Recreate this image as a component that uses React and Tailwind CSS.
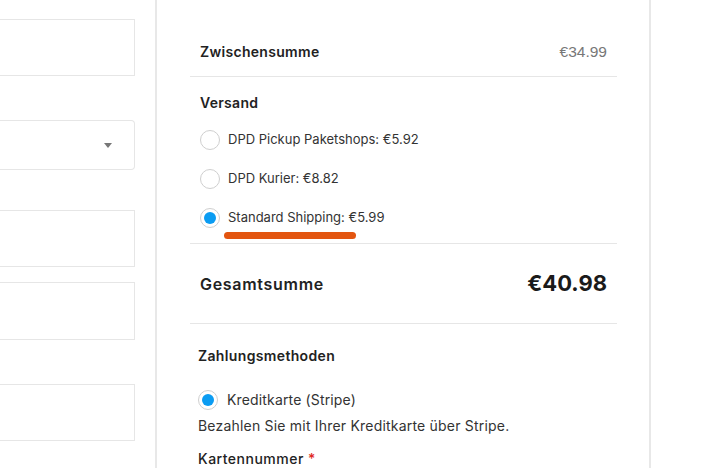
import React, { useState } from 'react';

const Radio = ({ checked }) => (
  <span className="w-[20px] h-[20px] rounded-full border border-[#cfcfcf] bg-white flex items-center justify-center shrink-0">
    {checked && <span className="w-[12px] h-[12px] rounded-full bg-[#0b9cf2]" />}
  </span>
);

const shipping = [
  { id: 'pickup', label: 'DPD Pickup Paketshops: €5.92' },
  { id: 'kurier', label: 'DPD Kurier: €8.82' },
  { id: 'standard', label: 'Standard Shipping: €5.99' },
];

const App = () => {
  const [method, setMethod] = useState('standard');

  return (
    <div className="w-[714px] h-[468px] flex bg-white overflow-hidden text-[#222] font-['Inter','Open_Sans',sans-serif]">
      {/* left form column, cut off */}
      <div className="w-[155px] shrink-0 pr-[20px] pt-[19px] flex flex-col">
        <div className="h-[57px] border-y border-r border-[#e6e6e6]" />
        <div className="h-[50px] mt-[44px] border-y border-r border-[#e6e6e6] rounded-r-[4px] flex items-center justify-end pr-[22px]">
          <span className="w-0 h-0 border-l-[4px] border-r-[4px] border-t-[5px] border-l-transparent border-r-transparent border-t-[#777]" />
        </div>
        <div className="h-[57px] mt-[40px] border-y border-r border-[#e6e6e6]" />
        <div className="h-[58px] mt-[15px] border-y border-r border-[#e6e6e6]" />
        <div className="h-[57px] mt-[44px] border-y border-r border-[#e6e6e6]" />
      </div>

      {/* order summary card */}
      <div className="w-[496px] shrink-0 border-x-2 border-[#e8e8e8] pl-[33px] pr-[32px] pt-[27px]">
        <div className="h-[50px] flex items-center justify-between px-[10px] border-b border-[#e6e6e6]">
          <span className="text-[14px] font-semibold tracking-[0.3px]">Zwischensumme</span>
          <span className="text-[15.5px] text-[#777] font-['Liberation_Sans',sans-serif]">€34.99</span>
        </div>

        <div className="px-[10px] pt-[16px] border-b border-[#e6e6e6] h-[167px]">
          <div className="text-[14px] font-semibold leading-[20px] tracking-[0.3px]">Versand</div>
          <div className="flex flex-col mt-[7px]">
            {shipping.map((s) => (
              <button
                key={s.id}
                onClick={() => setMethod(s.id)}
                className="h-[39px] flex items-center gap-[8px] text-left"
              >
                <Radio checked={method === s.id} />
                <span className="relative text-[13px] text-[#333]">
                  {s.label}
                  {s.id === 'standard' && method === 'standard' && (
                    <span className="absolute left-[-4px] top-[24px] w-[132px] h-[7px] rounded-full bg-[#e35510]" />
                  )}
                </span>
              </button>
            ))}
          </div>
        </div>

        <div className="h-[80px] flex items-center justify-between px-[10px] border-b border-[#e6e6e6]">
          <span className="text-[16px] font-semibold tracking-[0.7px]">Gesamtsumme</span>
          <span className="text-[22px] font-bold text-[#1a1a1a]">€40.98</span>
        </div>

        <div className="px-[8px] pt-[22px]">
          <div className="text-[14px] font-semibold leading-[20px] tracking-[0.35px]">Zahlungsmethoden</div>
          <div className="flex items-center gap-[9px] mt-[23px]">
            <Radio checked />
            <span className="text-[14px] text-[#333] tracking-[0.15px]">Kreditkarte (Stripe)</span>
          </div>
          <div className="text-[14px] text-[#333] mt-[5px] tracking-[0.2px]">Bezahlen Sie mit Ihrer Kreditkarte über Stripe.</div>
          <div className="text-[14px] font-medium mt-[12px] tracking-[0.5px]">
            Kartennummer <span className="text-[#e0281e]">*</span>
          </div>
        </div>
      </div>

      <div className="flex-1" />
    </div>
  );
};

export default App;
